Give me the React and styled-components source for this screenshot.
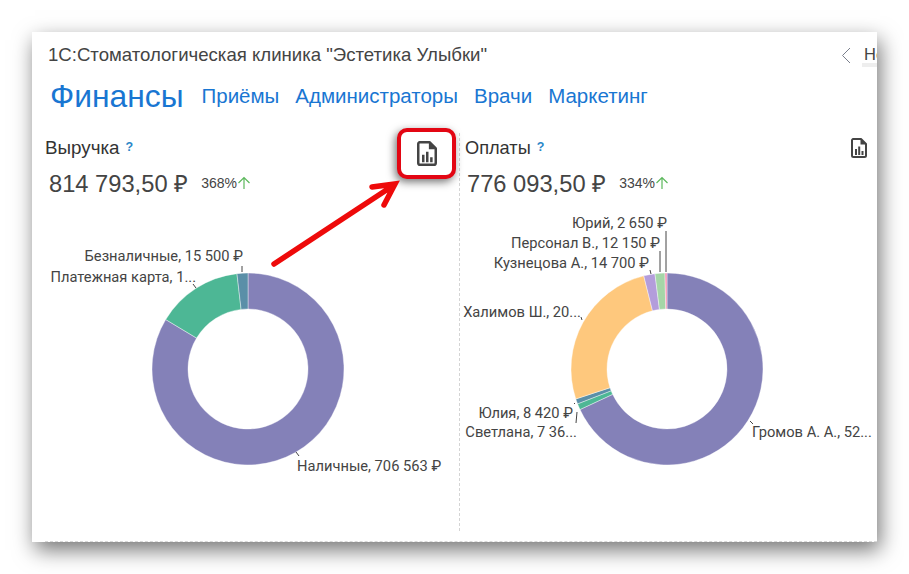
import React from 'react';
import styled, { createGlobalStyle } from 'styled-components';

const GlobalStyle = createGlobalStyle`
  html, body { margin: 0; padding: 0; background: #fff; }
  body { font-family: "Liberation Sans", Arial, sans-serif; }
`;

const Page = styled.div`
  width: 909px;
  height: 574px;
  padding: 32px 0 0 32px;
  box-sizing: border-box;
  overflow: hidden;
`;

const Card = styled.div`
  position: relative;
  width: 845px;
  height: 510px;
  background: #fff;
  box-shadow: 3px 8px 20px rgba(0, 0, 0, 0.55);
  display: flex;
  flex-direction: column;
`;

const TopBar = styled.div`
  height: 45px;
  padding: 12px 0 0 16px;
  box-sizing: border-box;
  display: flex;
  align-items: flex-start;
  overflow: hidden;
`;

const Title = styled.div`
  font-size: 18.6px;
  line-height: 21px;
  color: #444;
  flex: 1;
`;

const Pager = styled.div`
  width: 36px;
  display: flex;
  gap: 11px;
  overflow: hidden;
  flex-shrink: 0;
`;

const NextName = styled.span`
  font-size: 16.5px;
  line-height: 21px;
  color: #444;
  border-bottom: 4px solid #eee;
  height: 19px;
  padding-left: 2px;
`;

const Nav = styled.nav`
  display: flex;
  align-items: center;
  gap: 16px;
  padding: 0 0 0 18px;
  height: 38px;
  margin-bottom: 18px;
`;

const NavItem = styled.a`
  color: #1976d2;
  font-size: ${(p) => (p.$active ? '31.8px' : '20.5px')};
  line-height: 38px;
  margin-right: ${(p) => (p.$active ? '2px' : '0')};
`;

const Columns = styled.div`
  flex: 1;
  position: relative;
  display: grid;
  grid-template-columns: 428px 417px;

  &::after {
    content: '';
    position: absolute;
    left: 13px;
    right: 0;
    bottom: 0;
    border-bottom: 1px dashed #d8d8d8;
  }
`;

const Panel = styled.section`
  display: flex;
  flex-direction: column;
  min-width: 0;
  margin-bottom: 11px;
  border-right: ${(p) => (p.$divided ? '1px dashed #d4d4d4' : 'none')};
`;

const PanelHead = styled.div`
  height: 30px;
  display: flex;
  align-items: center;
  padding: ${(p) => (p.$right ? '0 10px 0 5px' : '0 10px 0 13px')};
`;

const PanelName = styled.h3`
  margin: 0;
  font-weight: 400;
  font-size: ${(p) => (p.$wide ? '18.8px' : '18.2px')};
  color: #333;
`;

const Hint = styled.span`
  margin-left: 6px;
  font-size: 12.5px;
  font-weight: 700;
  color: #2a86c8;
  position: relative;
  top: -1px;
  flex: 1;
`;

const Total = styled.div`
  display: flex;
  align-items: center;
  height: 40px;
  padding-left: ${(p) => (p.$right ? '7px' : '17px')};
`;

const Amount = styled.span`
  font-size: 23.7px;
  color: #444;
  margin-right: 13px;
`;

const Delta = styled.span`
  font-size: 14px;
  color: #444;
`;

const ChartBox = styled.svg`
  display: block;
  width: 417px;
  height: 325px;
  margin-top: 3px;
  text {
    font-family: Roboto, "Liberation Sans", sans-serif;
    font-size: 14.7px;
    fill: #444;
  }
`;

const Callout = styled.div`
  position: absolute;
  left: 365px;
  top: 96px;
  width: 51px;
  height: 43px;
  border: 4px solid #e30613;
  border-radius: 10px;
  background: #fff;
  box-shadow: -2px 3px 8px rgba(0, 0, 0, 0.55);
  display: flex;
  align-items: center;
  justify-content: center;
`;

const ArrowLayer = styled.svg`
  position: absolute;
  left: 225px;
  top: 140px;
  width: 150px;
  height: 110px;
  pointer-events: none;
`;

const ReportIcon = ({ size = 16 }) => (
  <svg width={size} height={size * 1.25} viewBox="0 0 16 20" fill="none">
    <path
      d="M3 1h7l5 5v11.5a1.5 1.5 0 0 1-1.5 1.5h-11A1.5 1.5 0 0 1 1 17.5v-15A1.5 1.5 0 0 1 3 1z"
      stroke="#444"
      strokeWidth="2"
      strokeLinejoin="round"
    />
    <path d="M9.5 1v5.5H15z" fill="#444" />
    <path d="M4 11h2v6H4zM7.2 8.5h2V17h-2zM10.5 13h2v4h-2z" fill="#444" />
  </svg>
);

const ArrowUp = () => (
  <svg width="14" height="14" viewBox="0 0 14 14" fill="none" style={{ verticalAlign: '-2px' }}>
    <path d="M7 13V1.5M1.5 7L7 1.5 12.5 7" stroke="#5cb85c" strokeWidth="1.2" />
  </svg>
);

const polar = (cx, cy, r, deg) => {
  const a = ((deg - 90) * Math.PI) / 180;
  return [cx + r * Math.cos(a), cy + r * Math.sin(a)];
};

const arcPath = (cx, cy, from, to) => {
  const R = 96;
  const r = 60;
  const big = to - from > 180 ? 1 : 0;
  const [x1, y1] = polar(cx, cy, R, from);
  const [x2, y2] = polar(cx, cy, R, to);
  const [x3, y3] = polar(cx, cy, r, to);
  const [x4, y4] = polar(cx, cy, r, from);
  return `M${x1} ${y1}A${R} ${R} 0 ${big} 1 ${x2} ${y2}L${x3} ${y3}A${r} ${r} 0 ${big} 0 ${x4} ${y4}Z`;
};

const Donut = ({ cx, cy, slices, labels, leaders }) => (
  <ChartBox viewBox="0 0 417 325">
    {slices.map((s) => (
      <path key={s.color} d={arcPath(cx, cy, s.from, s.to)} fill={s.color} stroke="#fff" strokeWidth="0.4" />
    ))}
    {leaders.map((l, i) => (
      <line key={i} x1={l[0]} y1={l[1]} x2={l[2]} y2={l[3]} stroke="#444" strokeWidth="1" />
    ))}
    {labels.map((l) => (
      <text key={l.text} x={l.x} y={l.y} textAnchor={l.end ? 'end' : 'start'}>
        {l.text}
      </text>
    ))}
  </ChartBox>
);

// chart box starts at y=206 of the page, panels at x=32 and x=460
const revenue = {
  cx: 216,
  cy: 163,
  slices: [
    { color: '#8481b8', from: 0, to: 301 },
    { color: '#4db795', from: 301, to: 353.4 },
    { color: '#5a8fa8', from: 353.4, to: 360 },
  ],
  labels: [
    { text: 'Безналичные, 15 500 ₽', x: 211, y: 55, end: true },
    { text: 'Платежная карта, 1...', x: 164, y: 76, end: true },
    { text: 'Наличные, 706 563 ₽', x: 265, y: 265 },
  ],
  leaders: [
    [210, 60, 210, 66],
    [161, 78, 164, 82],
    [264, 246, 267, 250],
  ],
};

const payments = {
  cx: 207,
  cy: 163,
  slices: [
    { color: '#8481b8', from: 0, to: 245 },
    { color: '#4db795', from: 245, to: 248.7 },
    { color: '#5a8fa8', from: 248.7, to: 251.8 },
    { color: '#fec87d', from: 251.8, to: 346 },
    { color: '#b39ddb', from: 346, to: 352.8 },
    { color: '#a5d6a7', from: 352.8, to: 358.8 },
    { color: '#f48fb1', from: 358.8, to: 360 },
  ],
  labels: [
    { text: 'Юрий, 2 650 ₽', x: 207, y: 22, end: true },
    { text: 'Персонал В., 12 150 ₽', x: 200, y: 42, end: true },
    { text: 'Кузнецова А., 14 700 ₽', x: 189, y: 62, end: true },
    { text: 'Халимов Ш., 20...', x: 121, y: 111, end: true },
    { text: 'Юлия, 8 420 ₽', x: 113, y: 212, end: true },
    { text: 'Светлана, 7 36...', x: 117, y: 231, end: true },
    { text: 'Громов А. А., 52...', x: 292, y: 231 },
  ],
  leaders: [
    [206, 25, 206, 66],
    [200, 45, 200, 66],
    [190, 64, 191, 68],
    [121, 111, 122, 114],
    [114, 197, 115, 198],
    [117, 206, 116, 217],
    [290, 215, 293, 218],
  ],
};

export default function App() {
  return (
    <Page>
      <GlobalStyle />
      <Card>
        <TopBar>
          <Title>1С:Стоматологическая клиника "Эстетика Улыбки"</Title>
          <Pager>
            <svg width="10" height="17" viewBox="0 0 10 17" fill="none" style={{ marginTop: 3, flexShrink: 0 }}>
              <path d="M9 1L1.5 8.5 9 16" stroke="#7a7f8c" strokeWidth="1" />
            </svg>
            <NextName>Не</NextName>
          </Pager>
        </TopBar>
        <Nav>
          <NavItem $active>Финансы</NavItem>
          <NavItem>Приёмы</NavItem>
          <NavItem>Администраторы</NavItem>
          <NavItem>Врачи</NavItem>
          <NavItem>Маркетинг</NavItem>
        </Nav>
        <Columns>
          <Panel $divided>
            <PanelHead>
              <PanelName $wide>Выручка</PanelName>
              <Hint>?</Hint>
            </PanelHead>
            <Total>
              <Amount>814 793,50 ₽</Amount>
              <Delta>368%<ArrowUp /></Delta>
            </Total>
            <Donut {...revenue} />
          </Panel>
          <Panel>
            <PanelHead $right>
              <PanelName>Оплаты</PanelName>
              <Hint>?</Hint>
              <ReportIcon />
            </PanelHead>
            <Total $right>
              <Amount>776 093,50 ₽</Amount>
              <Delta>334%<ArrowUp /></Delta>
            </Total>
            <Donut {...payments} />
          </Panel>
        </Columns>
        <Callout>
          <ReportIcon size={20} />
        </Callout>
        <ArrowLayer viewBox="0 0 150 110">
          <path
            d="M17 92L137 13M115 15L138 12L127 33"
            stroke="#ee0a0a"
            strokeWidth="5.5"
            strokeLinecap="round"
            strokeLinejoin="miter"
            fill="none"
          />
        </ArrowLayer>
      </Card>
    </Page>
  );
}
